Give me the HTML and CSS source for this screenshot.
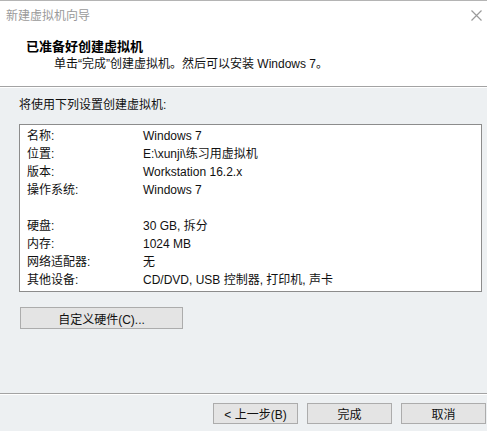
FILE: index.html
```html
<!DOCTYPE html>
<html lang="zh-CN">
<head>
<meta charset="utf-8">
<link rel="stylesheet" href="styles.css">
</head>
<body>
<div class="window">
  <div class="titlebar">
    <span class="title">新建虚拟机向导</span>
    <svg class="close" width="11" height="11" viewBox="0 0 11 11"><path d="M0.5 0.5 L10.5 10.5 M10.5 0.5 L0.5 10.5" stroke="#9a9a9a" stroke-width="1.2" fill="none"/></svg>
  </div>
  <div class="header">
    <div class="h-title">已准备好创建虚拟机</div>
    <div class="h-sub">单击“完成”创建虚拟机。然后可以安装 Windows 7。</div>
  </div>
  <div class="content">
    <div class="intro">将使用下列设置创建虚拟机:</div>
    <div class="box">
      <div class="row"><span class="k">名称:</span><span class="v">Windows 7</span></div>
      <div class="row"><span class="k">位置:</span><span class="v">E:\xunji\练习用虚拟机</span></div>
      <div class="row"><span class="k">版本:</span><span class="v">Workstation 16.2.x</span></div>
      <div class="row"><span class="k">操作系统:</span><span class="v">Windows 7</span></div>
      <div class="row"></div>
      <div class="row"><span class="k">硬盘:</span><span class="v">30 GB, 拆分</span></div>
      <div class="row"><span class="k">内存:</span><span class="v">1024 MB</span></div>
      <div class="row"><span class="k">网络适配器:</span><span class="v">无</span></div>
      <div class="row"><span class="k">其他设备:</span><span class="v">CD/DVD, USB 控制器, 打印机, 声卡</span></div>
    </div>
    <div class="btn custom">自定义硬件(C)...</div>
  </div>
  <div class="footer">
    <div class="btn">&lt; 上一步(B)</div>
    <div class="btn">完成</div>
    <div class="btn">取消</div>
  </div>
</div>
</body>
</html>
```
FILE: styles.css
```css
html, body {
  margin: 0;
  padding: 0;
}
body {
  width: 487px;
  height: 431px;
  overflow: hidden;
  background: #edf0f2;
  font-family: "Liberation Sans", "Noto Sans CJK SC", sans-serif;
  font-size: 12px;
  color: #111;
}
.window {
  display: flex;
  flex-direction: column;
  height: 431px;
}
.titlebar {
  height: 29px;
  background: #fff;
  border-top: 1px solid #b4b4b4;
  display: flex;
  align-items: center;
  justify-content: space-between;
  padding: 0 4px 0 6px;
}
.title {
  color: #9a9a9a;
  font-size: 12px;
  line-height: 14px;
}
.close {
  display: block;
  margin-right: 1px;
}
.header {
  background: #fff;
  height: 57px;
  border-bottom: 1px solid #a3a3a3;
  box-shadow: 0 1px 0 #fff;
  box-sizing: border-box;
  padding-top: 8px;
}
.h-title {
  font-weight: bold;
  font-size: 13px;
  line-height: 17px;
  padding-left: 26px;
  color: #000;
}
.h-sub {
  line-height: 18px;
  padding-left: 54px;
  color: #111;
}
.content {
  padding: 10px 5px 0 19px;
  flex: 1;
}
.intro {
  line-height: 16px;
}
.box {
  margin-top: 11px;
  height: 168px;
  box-sizing: border-box;
  background: #fff;
  border: 1px solid #8c8c8c;
  padding: 2px 0 0 7px;
}
.row {
  display: flex;
  height: 18px;
  line-height: 18px;
}
.k {
  width: 116px;
}
.btn {
  box-sizing: border-box;
  height: 21px;
  width: 85px;
  background: #e4e4e4;
  border: 1px solid #acacac;
  display: flex;
  align-items: center;
  justify-content: center;
  color: #111;
}
.custom {
  margin-top: 15px;
  margin-left: 1px;
  width: 163px;
  height: 22px;
}
.footer {
  height: 38px;
  box-sizing: border-box;
  border-top: 1px solid #a3a3a3;
  box-shadow: inset 0 1px 0 #fff;
  display: flex;
  justify-content: flex-end;
  gap: 9px;
  padding: 9px 1px 0 0;
}
```
